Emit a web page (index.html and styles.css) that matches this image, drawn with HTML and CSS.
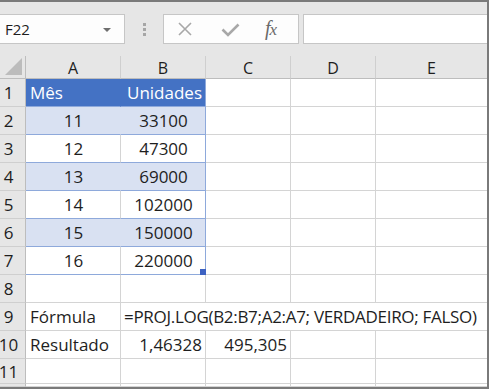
FILE: index.html
```html
<!DOCTYPE html>
<html lang="pt">
<head>
    <meta charset="UTF-8">
    <title>PROJ.LOG</title>
    <link rel="stylesheet" href="styles.css">
</head>
<body>
<div class="window">
    <div class="toolbar">
        <div class="namebox">
            <span>F22</span>
            <span class="caret"></span>
        </div>
        <div class="grip"><i></i><i></i><i></i></div>
        <div class="fbuttons">
            <svg class="ico-x" width="16" height="14" viewBox="0 0 16 14"><path d="M2 1 L14 13 M14 1 L2 13" stroke="#a8a8a8" stroke-width="1.6" fill="none"/></svg>
            <svg class="ico-ok" width="19" height="14" viewBox="0 0 19 14"><path d="M1.5 6.5 L7 12 L17.5 1.5" stroke="#a8a8a8" stroke-width="2.6" fill="none"/></svg>
            <span class="fx">f<span class="fx-x">x</span></span>
        </div>
        <div class="fbar"></div>
    </div>

    <div class="sheet">
        <div class="corner"><svg width="17" height="17" viewBox="0 0 17 17"><path d="M17 0 L17 17 L0 17 Z" fill="#bcbcbc"/></svg></div>
        <div class="colhead">A</div>
        <div class="colhead">B</div>
        <div class="colhead">C</div>
        <div class="colhead">D</div>
        <div class="colhead last">E</div>

        <div class="rowhead">1</div>
        <div class="cell ta hdr">Mês</div>
        <div class="cell tb hdr right">Unidades</div>
        <div class="cell"></div><div class="cell"></div><div class="cell last"></div>

        <div class="rowhead">2</div>
        <div class="cell ta band center">11</div>
        <div class="cell tb band center">33100</div>
        <div class="cell"></div><div class="cell"></div><div class="cell last"></div>

        <div class="rowhead">3</div>
        <div class="cell ta plain center">12</div>
        <div class="cell tb plain center">47300</div>
        <div class="cell"></div><div class="cell"></div><div class="cell last"></div>

        <div class="rowhead">4</div>
        <div class="cell ta band center">13</div>
        <div class="cell tb band center">69000</div>
        <div class="cell"></div><div class="cell"></div><div class="cell last"></div>

        <div class="rowhead">5</div>
        <div class="cell ta plain center">14</div>
        <div class="cell tb plain center">102000</div>
        <div class="cell"></div><div class="cell"></div><div class="cell last"></div>

        <div class="rowhead">6</div>
        <div class="cell ta band center">15</div>
        <div class="cell tb band center">150000</div>
        <div class="cell"></div><div class="cell"></div><div class="cell last"></div>

        <div class="rowhead">7</div>
        <div class="cell ta plain center">16</div>
        <div class="cell tb plain center handle">220000</div>
        <div class="cell"></div><div class="cell"></div><div class="cell last"></div>

        <div class="rowhead">8</div>
        <div class="cell"></div><div class="cell"></div><div class="cell"></div><div class="cell"></div><div class="cell last"></div>

        <div class="rowhead">9</div>
        <div class="cell">Fórmula</div>
        <div class="cell wide last">=PROJ.LOG(B2:B7;A2:A7; VERDADEIRO; FALSO)</div>

        <div class="rowhead">10</div>
        <div class="cell">Resultado</div>
        <div class="cell right">1,46328</div>
        <div class="cell right">495,305</div>
        <div class="cell"></div><div class="cell last"></div>

        <div class="rowhead">11</div>
        <div class="cell"></div><div class="cell"></div><div class="cell"></div><div class="cell"></div><div class="cell last"></div>

        <div class="rowhead"></div>
        <div class="cell"></div><div class="cell"></div><div class="cell"></div><div class="cell"></div><div class="cell last"></div>
    </div>
</div>
</body>
</html>
```

FILE: styles.css
```css
body {
    margin: 0;
    background: #fff;
    font-family: "Open Sans", "Noto Sans", sans-serif;
    color: #1e1e1e;
}
.window {
    width: 489px;
    box-sizing: border-box;
    border-top: 2px solid #7a7a7a;
    border-right: 2px solid #7a7a7a;
    border-bottom: 2px solid #7a7a7a;
    background: #fff;
}

/* barra de fórmulas */
.toolbar {
    height: 54px;
    box-sizing: border-box;
    padding-top: 12px;
    background: #e6e6e6;
    display: flex;
    align-items: flex-start;
}
.namebox {
    width: 125px;
    height: 30px;
    box-sizing: border-box;
    border: 1px solid #c6c6c6;
    border-left: none;
    background: #fdfdfd;
    display: flex;
    align-items: center;
    justify-content: space-between;
    padding: 0 13px 0 5px;
    font-size: 15px;
}
.caret {
    width: 0;
    height: 0;
    border-left: 4px solid transparent;
    border-right: 4px solid transparent;
    border-top: 4px solid #6e6e6e;
    margin-top: 1px;
}
.grip {
    width: 38px;
    height: 30px;
    display: flex;
    flex-direction: column;
    align-items: center;
    justify-content: center;
    gap: 2px;
}
.grip i {
    display: block;
    width: 3px;
    height: 3px;
    background: #a6a6a6;
}
.fbuttons {
    width: 136px;
    height: 30px;
    box-sizing: border-box;
    border: 1px solid #c6c6c6;
    background: #fdfdfd;
    display: flex;
    align-items: center;
}
.ico-x {
    margin-left: 13px;
}
.ico-ok {
    margin-left: 28px;
    margin-top: 1px;
}
.fx {
    margin-left: 25px;
    font-family: "Liberation Serif", serif;
    font-style: italic;
    font-size: 20px;
    color: #6a6a6a;
    letter-spacing: -1px;
    margin-top: -2px;
}
.fx-x {
    font-size: 17px;
}
.fbar {
    margin-left: 4px;
    flex: 1;
    height: 30px;
    box-sizing: border-box;
    border: 1px solid #c6c6c6;
    border-right: none;
    background: #fff;
}

/* planilha */
.sheet {
    display: grid;
    grid-template-columns: 26px 95px 85px 85px 85px 111px;
    grid-template-rows: 23px repeat(10, 28px) 25px 3px;
}
.sheet > div {
    box-sizing: border-box;
    border-right: 1px solid #d4d4d4;
    border-bottom: 1px solid #d4d4d4;
    white-space: nowrap;
}
.corner {
    background: #e6e6e6;
    display: flex;
    align-items: flex-end;
    justify-content: flex-end;
    padding: 0 3px 3px 0;
    border-right-color: #bdbdbd !important;
    border-bottom-color: #bdbdbd !important;
}
.colhead {
    background: #e6e6e6;
    border-right-color: #cfcfcf !important;
    border-bottom-color: #bdbdbd !important;
    display: flex;
    align-items: center;
    justify-content: center;
    font-size: 16px;
    padding-top: 1px;
}
.rowhead {
    background: #e6e6e6;
    border-right-color: #bdbdbd !important;
    border-bottom-color: #cfcfcf !important;
    display: flex;
    align-items: center;
    justify-content: center;
    padding-right: 8px;
    font-size: 17px;
}
.cell {
    display: flex;
    align-items: center;
    padding: 0 3px 0 4px;
    font-size: 17px;
}
.sheet > .last {
    border-right: none;
}
.center {
    justify-content: center;
}
.right {
    justify-content: flex-end;
}
.wide {
    grid-column: span 4;
    padding-left: 3px;
    letter-spacing: -0.3px;
}

/* tabela formatada */
.sheet > .hdr {
    background: #4472c4;
    color: #fff;
    border-bottom-color: #8ea9db;
}
.sheet > .hdr.ta {
    border-right-color: #4472c4;
}
.sheet > .band {
    background: #d9e1f2;
    border-bottom-color: #8ea9db;
}
.sheet > .band.ta {
    border-right-color: #d9e1f2;
}
.sheet > .plain {
    border-bottom-color: #8ea9db;
}
.sheet > .tb {
    border-right-color: #8ea9db;
}
.handle {
    position: relative;
}
.handle::after {
    content: "";
    position: absolute;
    right: -1px;
    bottom: -1px;
    width: 6px;
    height: 6px;
    background: #3d62c2;
}
```
